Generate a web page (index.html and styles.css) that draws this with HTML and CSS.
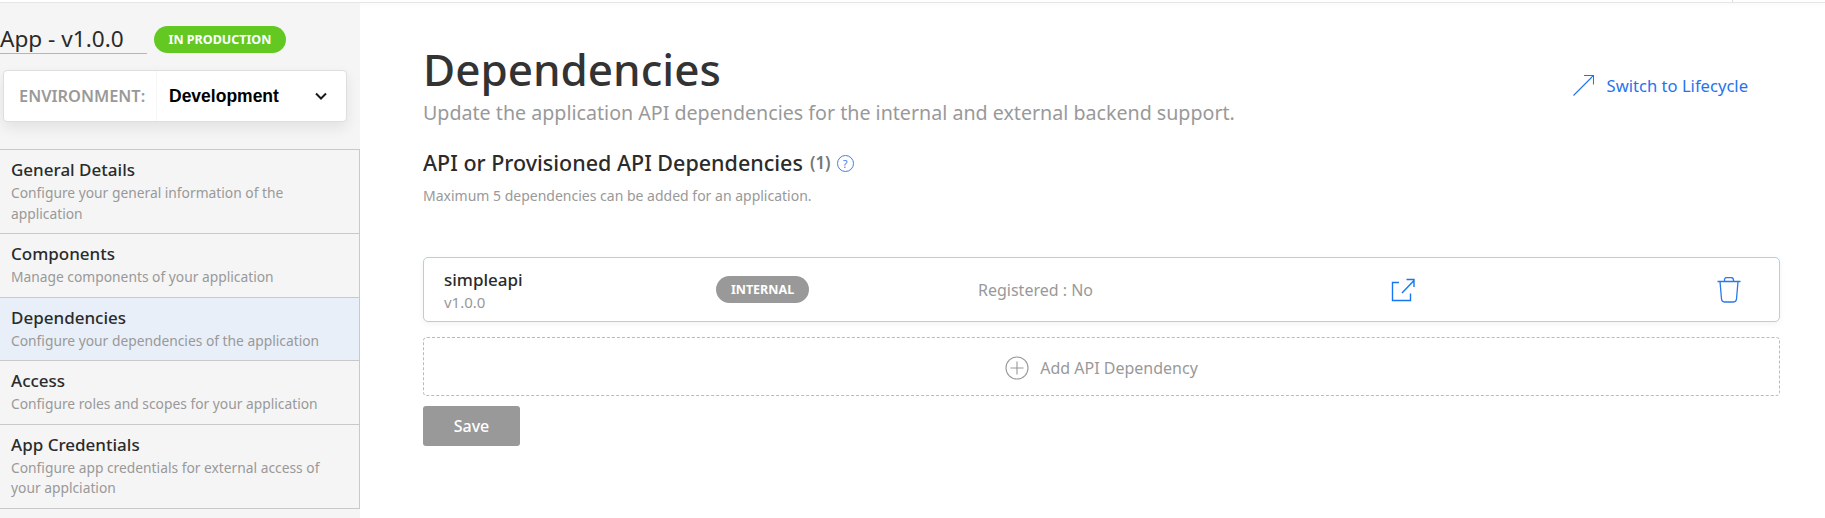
FILE: index.html
```html
<!DOCTYPE html>
<html lang="en">
<head>
    <meta charset="UTF-8">
    <meta name="viewport" content="width=device-width, initial-scale=1.0">
    <title>Dependencies</title>
    <link rel="stylesheet" href="styles.css">
</head>
<body>

    <div class="top-bar"><span class="top-tick"></span></div>

    <div class="page">
        <aside class="sidebar">
            <div class="app-head">
                <h2 class="app-title">App - v1.0.0</h2>
                <span class="prod-badge">IN PRODUCTION</span>
            </div>

            <div class="env-box">
                <span class="env-label">ENVIRONMENT:</span>
                <span class="env-value">Development</span>
                <svg class="env-chevron" width="14" height="9" viewBox="0 0 14 9" fill="none" stroke="#1a1a1a" stroke-width="2">
                    <path d="M2 1.5l5 5 5-5"/>
                </svg>
            </div>

            <nav class="side-menu">
                <a class="menu-item">
                    <strong>General Details</strong>
                    <span>Configure your general information of the application</span>
                </a>
                <a class="menu-item">
                    <strong>Components</strong>
                    <span>Manage components of your application</span>
                </a>
                <a class="menu-item active">
                    <strong>Dependencies</strong>
                    <span>Configure your dependencies of the application</span>
                </a>
                <a class="menu-item">
                    <strong>Access</strong>
                    <span>Configure roles and scopes for your application</span>
                </a>
                <a class="menu-item">
                    <strong>App Credentials</strong>
                    <span>Configure app credentials for external access of your applciation</span>
                </a>
            </nav>
        </aside>

        <main class="content">
            <div class="content-head">
                <div>
                    <h1>Dependencies</h1>
                    <p class="subtitle">Update the application API dependencies for the internal and external backend support.</p>
                </div>
                <a class="switch-link">
                    <svg width="21" height="21" viewBox="0 0 21 21" fill="none" stroke="#1f74ee" stroke-width="1.1">
                        <path d="M0.500 20.500L20.500 0.500M11 0.500h9.500v9"/>
                    </svg>
                    Switch to Lifecycle
                </a>
            </div>

            <h3 class="section-title">
                API or Provisioned API Dependencies <span class="count">(1)</span>
                <span class="help-icon">?</span>
            </h3>
            <p class="note">Maximum 5 dependencies can be added for an application.</p>

            <div class="dep-card">
                <div class="dep-name">
                    <strong>simpleapi</strong>
                    <span>v1.0.0</span>
                </div>
                <div class="dep-type"><span class="type-badge">INTERNAL</span></div>
                <div class="dep-status">Registered : No</div>
                <div class="dep-open">
                    <svg width="24" height="24" viewBox="0 0 24 24" fill="none" stroke="#1677f0" stroke-width="1.4">
                        <path d="M8 4.500H1.500v18h18v-7"/>
                        <path d="M11 15L23 2.500M15.500 1.500h7.500v7.500"/>
                    </svg>
                </div>
                <div class="dep-delete">
                    <svg width="24" height="26" viewBox="0 0 24 26" fill="none" stroke="#2a78ec" stroke-width="1.3">
                        <path d="M0.500 4.500h23M3 4.500l1.500 17.500q0.300 3 3 3h9q2.700 0 3-3L21 4.500"/>
                        <path d="M7.500 4.500v-1.500q0-2.500 2.500-2.500h4q2.500 0 2.500 2.500v1.500"/>
                    </svg>
                </div>
            </div>

            <div class="add-box">
                <svg width="24" height="24" viewBox="0 0 24 24" fill="none" stroke="#999" stroke-width="1.1">
                    <circle cx="12" cy="12" r="11"/>
                    <path d="M12 5.500v13M5.500 12h13"/>
                </svg>
                <span>Add API Dependency</span>
            </div>

            <button class="save-btn">Save</button>
        </main>
    </div>

</body>
</html>
```

FILE: styles.css
```css
/* Global Styles */
html, body {
    height: 100%;
}

body {
    font-family: "Noto Sans", "Open Sans", sans-serif;
    margin: 0;
    padding: 0;
    background-color: #fff;
    color: #333;
    overflow: hidden;
}

.top-bar {
    height: 2px;
    padding-bottom: 0;
    border-bottom: 1px solid #e6e6e6;
    display: flex;
    justify-content: flex-end;
    box-shadow: 0 2px 4px rgba(0, 0, 0, 0.03);
    box-sizing: content-box;
}

.top-tick {
    width: 1px;
    background: #ddd;
    margin-right: 92px;
}

.page {
    display: flex;
    height: 515px;
}

/* Sidebar */
.sidebar {
    width: 360px;
    flex-shrink: 0;
    background-color: #f5f5f5;
}

.app-head {
    display: flex;
    align-items: flex-start;
    padding-top: 23px;
    height: 44px;
}

.app-title {
    margin: 0;
    width: 147px;
    height: 27px;
    border-bottom: 1px solid #f0b429;
    font-size: 22.600px;
    font-weight: 400;
    line-height: 25px;
    color: #2b2b2b;
    white-space: nowrap;
}

.prod-badge {
    margin-left: 7px;
    width: 132px;
    height: 27px;
    border-radius: 14px;
    background: #64c823;
    color: #fff;
    font-size: 12.500px;
    font-weight: 700;
    line-height: 27px;
    text-align: center;
}

.env-box {
    display: flex;
    align-items: center;
    height: 50px;
    width: 342px;
    margin-left: 3px;
    background: #fff;
    border: 1px solid #dedede;
    border-radius: 4px;
    box-sizing: content-box;
    box-shadow: 0 6px 14px rgba(0, 0, 0, 0.08);
}

.env-label {
    width: 153px;
    padding-left: 15px;
    box-sizing: border-box;
    border-right: 1px solid #f6f6f6;
    height: 50px;
    line-height: 50px;
    font-size: 16.400px;
    font-weight: 600;
    color: #999;
    white-space: nowrap;
}

.env-value {
    flex: 1;
    padding-left: 12px;
    font-family: "Liberation Sans", Arial, sans-serif;
    font-size: 17.500px;
    font-weight: 700;
    color: #000;
}

.env-chevron {
    margin-right: 18px;
}

.side-menu {
    margin-top: 27px;
    border-top: 1px solid #c9c9c9;
    border-right: 1px solid #c9c9c9;
}

.menu-item {
    display: block;
    padding: 7px 20px 9px 11px;
    border-bottom: 1px solid #c9c9c9;
}

.menu-item.active {
    background-color: #e8eff8;
}

.menu-item strong {
    display: block;
    font-size: 17px;
    font-weight: 500;
    line-height: 26px;
    color: #2b2b2b;
}

.menu-item span {
    display: block;
    font-size: 13.800px;
    line-height: 20.500px;
    color: #999;
}

/* Main content */
.content {
    flex: 1;
    padding: 0 45px 0 63px;
    min-width: 0;
}

.content-head {
    display: flex;
    justify-content: space-between;
    align-items: flex-start;
}

h1 {
    margin: 38px 0 0;
    font-size: 44px;
    font-weight: 500;
    line-height: 56px;
    color: #333;
}

.subtitle {
    margin: 2px 0 0;
    font-size: 19.650px;
    line-height: 28px;
    color: #999;
}

.switch-link {
    display: flex;
    align-items: center;
    gap: 13px;
    margin: 71px 32px 0 0;
    font-size: 16.600px;
    color: #1f74ee;
}

.section-title {
    display: flex;
    align-items: center;
    margin: 21px 0 0;
    font-size: 21.500px;
    font-weight: 500;
    line-height: 30px;
    color: #2b2b2b;
}

.count {
    margin-left: 7px;
    font-size: 17px;
    font-weight: 600;
    color: #777;
}

.help-icon {
    width: 15px;
    height: 15px;
    margin-left: 6px;
    border: 1px solid #3f7fe8;
    border-radius: 50%;
    color: #3f7fe8;
    font-size: 11px;
    font-weight: 400;
    line-height: 15px;
    text-align: center;
}

.note {
    margin: 9px 0 0;
    font-size: 14px;
    line-height: 18px;
    color: #999;
}

.dep-card {
    display: flex;
    align-items: center;
    height: 63px;
    margin-top: 52px;
    padding-left: 20px;
    background: #fff;
    border: 1px solid #a5d3f2;
    border-radius: 5px;
    box-shadow: 0 2px 6px rgba(0, 0, 0, 0.05);
}

.dep-name {
    width: 272px;
    flex-shrink: 0;
}

.dep-name strong {
    display: block;
    font-size: 17px;
    font-weight: 500;
    line-height: 24px;
    color: #2b2b2b;
}

.dep-name span {
    display: block;
    font-size: 15px;
    line-height: 20px;
    color: #999;
}

.dep-type {
    width: 262px;
    flex-shrink: 0;
}

.type-badge {
    display: block;
    width: 93px;
    height: 27px;
    border-radius: 14px;
    background: #999;
    color: #fff;
    font-size: 12.500px;
    font-weight: 700;
    line-height: 27px;
    text-align: center;
}

.dep-status {
    width: 413px;
    flex-shrink: 0;
    font-size: 16px;
    color: #999;
}

.dep-open {
    width: 326px;
    flex-shrink: 0;
    display: flex;
}

.dep-delete {
    display: flex;
}

.add-box {
    display: flex;
    align-items: center;
    justify-content: center;
    gap: 11px;
    height: 55px;
    padding-top: 2px;
    margin-top: 15px;
    border: 1px dashed #bbb;
    border-radius: 4px;
    font-size: 16px;
    color: #999;
}

.save-btn {
    display: block;
    width: 97px;
    height: 40px;
    margin-top: 10px;
    padding: 0;
    background-color: #999;
    color: #fff;
    border: none;
    border-radius: 3px;
    font-family: inherit;
    font-size: 16px;
    font-weight: 500;
}
```
